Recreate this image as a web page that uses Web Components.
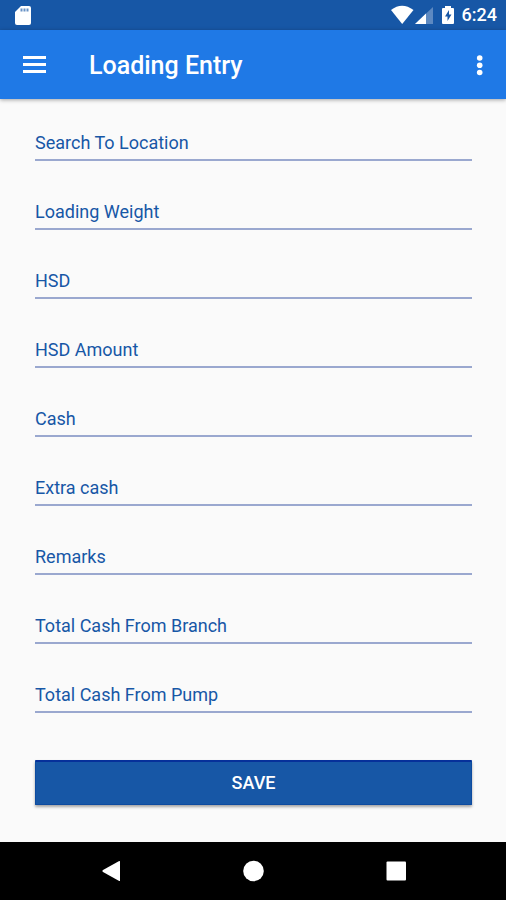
<!DOCTYPE html>
<html lang="en">
<head>
<meta charset="utf-8">
<meta name="viewport" content="width=device-width, initial-scale=1">
<title>Loading Entry</title>
<style>
  :root {
    --primary: #1f79e6;
    --primary-dark: #1757a6;
    --line: #9aa8cf;
    --bg: #fafafa;
  }
  body {
    margin: 0;
    background: var(--bg);
    font-family: Roboto, "Liberation Sans", sans-serif;
  }
</style>
</head>
<body>
<loading-screen>
  <status-bar slot="top" time="6:24"></status-bar>
  <app-bar slot="top">Loading Entry</app-bar>
  <entry-field name="location">Search To Location</entry-field>
  <entry-field name="weight">Loading Weight</entry-field>
  <entry-field name="hsd">HSD</entry-field>
  <entry-field name="hsd-amount">HSD Amount</entry-field>
  <entry-field name="cash">Cash</entry-field>
  <entry-field name="extra-cash">Extra cash</entry-field>
  <entry-field name="remarks">Remarks</entry-field>
  <entry-field name="branch-total">Total Cash From Branch</entry-field>
  <entry-field name="pump-total">Total Cash From Pump</entry-field>
  <save-button slot="action">SAVE</save-button>
  <nav-bar slot="bottom"></nav-bar>
</loading-screen>

<script>
class BaseElement extends HTMLElement {
  constructor() {
    super();
    const template = document.createElement("template");
    template.innerHTML = this.render();
    this.attachShadow({ mode: "open" });
    this.shadowRoot.appendChild(template.content.cloneNode(true));
  }
}

class LoadingScreen extends BaseElement {
  render() {
    return `
      <style>
        :host {
          display: flex;
          flex-direction: column;
          min-height: 100vh;
        }
        main {
          flex: 1;
          display: flex;
          flex-direction: column;
          gap: 47px;
          padding: 20px 34px 36px 35px;
        }
        .fields {
          display: flex;
          flex-direction: column;
          gap: 27px;
        }
      </style>
      <slot name="top"></slot>
      <main>
        <div class="fields"><slot></slot></div>
        <slot name="action"></slot>
      </main>
      <slot name="bottom"></slot>
    `;
  }
}

class StatusBar extends BaseElement {
  connectedCallback() {
    this.shadowRoot.querySelector("time").textContent = this.getAttribute("time");
  }

  render() {
    return `
      <style>
        :host {
          display: flex;
          align-items: center;
          justify-content: space-between;
          height: 30px;
          padding: 0 9px 0 14px;
          color: #fff;
          background: var(--primary-dark);
        }
        .right {
          display: flex;
          align-items: center;
          gap: 6px;
        }
        svg {
          display: block;
        }
        time {
          font-size: 18px;
          font-weight: 500;
          line-height: 30px;
        }
      </style>
      <svg width="18" height="30" viewBox="0 0 18 30">
        <path fill="#fff" d="M7 6h8q2 0 2 2v15q0 2-2 2H3q-2 0-2-2V12z"/>
        <path stroke="#1757a6" stroke-opacity=".65" stroke-width="2" d="M7.500 8.500v3M10.500 8.500v3M13.500 8.500v3"/>
      </svg>
      <div class="right">
        <svg width="66" height="30" viewBox="390 0 66 30">
          <path fill="#fff" d="M391 10Q402 1.500 413.500 10L402.200 24z"/>
          <path fill="#fff" fill-opacity=".3" d="M433 7v17h-18z"/>
          <path fill="#fff" d="M426 13.500V24h-11z"/>
          <path fill="#fff" d="M445 6h6v2h2q1 0 1 1v14q0 1-1 1h-10q-1 0-1-1V9q0-1 1-1h2z"/>
          <path fill="#1757a6" d="M449 10l-4 6.500h2.500V21l4-6.500H449z"/>
        </svg>
        <time></time>
      </div>
    `;
  }
}

class AppBar extends BaseElement {
  render() {
    return `
      <style>
        :host {
          display: flex;
          align-items: center;
          height: 69px;
          padding: 0 14px 0 23px;
          color: #fff;
          background: var(--primary);
          box-shadow: 0 1px 4px rgba(0, 0, 0, .35);
        }
        button {
          display: flex;
          padding: 0;
          border: 0;
          background: none;
          color: inherit;
        }
        h1 {
          flex: 1;
          margin: 0 0 0 42px;
          padding-top: 2px;
          font-size: 25px;
          font-weight: 500;
          line-height: 32px;
        }
      </style>
      <button type="button" aria-label="Menu">
        <svg width="24" height="24" viewBox="0 0 24 24" fill="currentColor">
          <path d="M0 3h23v3H0zM0 10h23v3H0zM0 17h23v3H0z"/>
        </svg>
      </button>
      <h1><slot></slot></h1>
      <button type="button" aria-label="More options">
        <svg width="24" height="24" viewBox="0 0 24 24" fill="currentColor">
          <circle cx="11.700" cy="5" r="2.800"/>
          <circle cx="11.700" cy="12.300" r="2.800"/>
          <circle cx="11.700" cy="19.500" r="2.800"/>
        </svg>
      </button>
    `;
  }
}

class EntryField extends BaseElement {
  connectedCallback() {
    const input = this.shadowRoot.querySelector("input");
    input.name = this.getAttribute("name");
    input.addEventListener("input", () => {
      this.toggleAttribute("filled", input.value !== "");
    });
  }

  // the label sits in the same grid cell as the input, as its hint
  render() {
    return `
      <style>
        :host {
          display: grid;
          color: var(--primary-dark);
        }
        label, input {
          grid-area: 1 / 1;
          font: 18px/24px Roboto, "Liberation Sans", sans-serif;
        }
        label {
          padding-top: 12px;
          pointer-events: none;
          z-index: 1;
        }
        :host([filled]) label {
          visibility: hidden;
        }
        input {
          box-sizing: border-box;
          width: 100%;
          height: 42px;
          padding: 12px 0 4px;
          border: 0;
          border-bottom: 2px solid var(--line);
          border-radius: 0;
          outline: 0;
          background: none;
          color: inherit;
        }
        input:focus {
          border-bottom-color: var(--primary);
        }
      </style>
      <label for="field"><slot></slot></label>
      <input id="field" type="text">
    `;
  }
}

class SaveButton extends BaseElement {
  render() {
    return `
      <style>
        :host {
          display: block;
        }
        button {
          display: block;
          width: 100%;
          height: 45px;
          padding: 0;
          border: 1px solid #0d4ba0;
          border-top: 2px solid #06309a;
          border-radius: 1px;
          background: var(--primary-dark);
          box-shadow: 0 2px 3px rgba(0, 0, 0, .35);
          color: #fff;
          font: 500 18px/24px Roboto, "Liberation Sans", sans-serif;
        }
      </style>
      <button type="button"><slot></slot></button>
    `;
  }
}

class NavBar extends BaseElement {
  render() {
    return `
      <style>
        :host {
          display: flex;
          align-items: center;
          justify-content: center;
          gap: 118px;
          height: 58px;
          background: #000;
          color: #fff;
        }
        button {
          display: flex;
          padding: 0;
          border: 0;
          background: none;
          color: inherit;
        }
      </style>
      <button type="button" aria-label="Back">
        <svg width="24" height="24" viewBox="0 0 24 24" fill="currentColor">
          <path d="M21 2.500v19q0 .8-.8.400L4 13q-1.500-1 0-2L20.200 2q.8-.4.800.500z"/>
        </svg>
      </button>
      <button type="button" aria-label="Home">
        <svg width="24" height="24" viewBox="0 0 24 24" fill="currentColor">
          <circle cx="12.500" cy="12" r="10.300"/>
        </svg>
      </button>
      <button type="button" aria-label="Recent apps">
        <svg width="24" height="24" viewBox="0 0 24 24" fill="currentColor">
          <rect x="3.500" y="2.500" width="19.500" height="19" rx="1"/>
        </svg>
      </button>
    `;
  }
}

customElements.define("loading-screen", LoadingScreen);
customElements.define("status-bar", StatusBar);
customElements.define("app-bar", AppBar);
customElements.define("entry-field", EntryField);
customElements.define("save-button", SaveButton);
customElements.define("nav-bar", NavBar);
</script>
</body>
</html>
